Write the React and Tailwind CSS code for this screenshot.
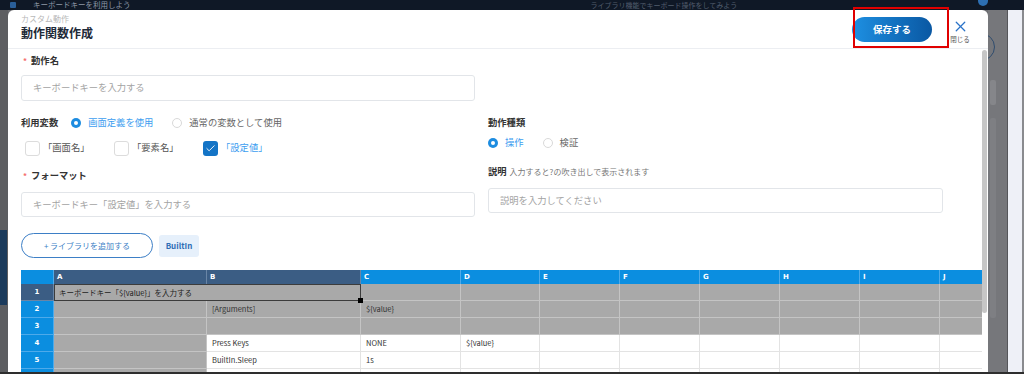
import { X, Check } from 'lucide-react';

const cols = [
  { k: 'A', w: 'w-[153px]', dark: true },
  { k: 'B', w: 'w-[154px]', dark: true },
  { k: 'C', w: 'w-[100px]' },
  { k: 'D', w: 'w-[79px]' },
  { k: 'E', w: 'w-[80px]' },
  { k: 'F', w: 'w-[80px]' },
  { k: 'G', w: 'w-[80px]' },
  { k: 'H', w: 'w-[80px]' },
  { k: 'I', w: 'w-[80px]' },
  { k: 'J', w: 'w-[80px]' },
];

const rows = [
  { n: 1, gray: true },
  { n: 2, gray: true, vals: { B: '[Arguments]', C: '${value}' } },
  { n: 3, gray: true },
  { n: 4, vals: { B: 'Press Keys', C: 'NONE', D: '${value}' } },
  { n: 5, vals: { B: 'BuiltIn.Sleep', C: '1s' } },
  { n: 6, hideNum: true },
];

function Radio({ on, label }) {
  return (
    <div className="flex items-center">
      {on ? (
        <span className="w-[10px] h-[10px] rounded-full bg-[#1d8ce0] flex items-center justify-center">
          <span className="w-[4px] h-[4px] rounded-full bg-white" />
        </span>
      ) : (
        <span className="w-[10px] h-[10px] rounded-full border border-[#d9d9d9] bg-white" />
      )}
      <span className={`ml-[7px] ${on ? 'text-[#3d9ef0]' : 'text-[#666]'}`}>{label}</span>
    </div>
  );
}

function Box({ on, label }) {
  return (
    <div className="w-[89px] flex items-center">
      {on ? (
        <span className="w-[15px] h-[15px] rounded-[3px] bg-[#1474c6] flex items-center justify-center">
          <Check size={11} strokeWidth={2} className="text-white" />
        </span>
      ) : (
        <span className="w-[15px] h-[15px] rounded-[3px] border border-[#dcdcdc] bg-white" />
      )}
      <span className={`ml-[3px] ${on ? 'text-[#3d9ef0]' : 'text-[#555]'}`}>{label}</span>
    </div>
  );
}

function Label({ req, children }) {
  return (
    <div className="h-[14px] flex items-center font-bold text-[#333]">
      {req && <span className="text-[#f56c6c] text-[8px] mr-[4px] ml-[2px]">*</span>}
      {children}
    </div>
  );
}

function Input({ ph }) {
  return (
    <div className="h-[25px] border border-[#e2e5e9] rounded-[3px] flex items-center pl-[11px] text-[#a3a3a3]">
      {ph}
    </div>
  );
}

function Sheet() {
  return (
    <div className="w-[961px] overflow-hidden mt-[12px] text-[7.5px]">
      <div className="flex w-[1100px] h-[14px] font-['DejaVu_Sans',sans-serif]">
        <div className="w-[33px] shrink-0 bg-[#0b8ee0] border-r border-[#4eaaea]" />
        {cols.map((c) => (
          <div
            key={c.k}
            className={`${c.w} shrink-0 pl-[3px] pt-[2px] text-white font-bold text-[7px] border-r ${
              c.dark ? 'bg-[#3b5d84] border-[#6985a6]' : 'bg-[#0b8ee0] border-[#4eaaea]'
            }`}
          >
            {c.k}
          </div>
        ))}
      </div>
      {rows.map((r) => (
        <div key={r.n} className="flex w-[1100px] h-[17px]">
          <div
            className={`w-[33px] shrink-0 flex items-center justify-center text-white font-bold text-[7px] border-b border-r font-['DejaVu_Sans',sans-serif] ${
              r.n === 1 ? 'bg-[#3b5d84] border-[#6985a6]' : 'bg-[#0b8ee0] border-[#4eaaea]'
            }`}
          >
            {!r.hideNum && r.n}
          </div>
          {r.n === 1 && (
            <div className="relative w-[307px] shrink-0 bg-[#a9a9a9] border border-[#3c3c3c] flex items-center pl-[4px] text-[#222]">
              キーボードキー「${'{value}'}」を入力する
              <span className="absolute right-[-3px] bottom-[-3px] w-[5px] h-[5px] bg-black z-10" />
            </div>
          )}
          {cols.map((c) => {
            if (r.n === 1 && (c.k === 'A' || c.k === 'B')) return null;
            const gray = r.gray || c.k === 'A';
            const v = r.vals && r.vals[c.k];
            return (
              <div
                key={c.k}
                className={`${c.w} shrink-0 flex items-center pl-[5px] text-[#333] border-r border-b ${
                  gray ? 'bg-[#a9a9a9] border-[#c4c4c4]' : 'bg-white border-[#e3e3e3]'
                }`}
              >
                {v}
              </div>
            );
          })}
        </div>
      ))}
    </div>
  );
}

export default function App() {
  return (
    <div className="relative w-[1024px] h-[374px] overflow-hidden flex flex-col bg-[#6b6c70] text-[9.3px] font-['Noto_Sans_CJK_JP','Noto_Sans',sans-serif]">
      <div className="h-[10px] shrink-0 bg-[#0f1826] flex items-center">
        <span className="ml-[10px] w-[6px] h-[6px] bg-[#2a5f9a] rounded-[1px]" />
        <span className="ml-[17px] text-[7.5px] leading-[10px] text-[#8e98a6] whitespace-nowrap">
          キーボードキーを利用しよう
        </span>
        <span className="ml-[460px] text-[7px] leading-[10px] text-[#525d6d] whitespace-nowrap">
          ライブラリ機能でキーボード操作をしてみよう
        </span>
        <span className="ml-auto mr-[36px] w-[10px] h-[6px] rounded-b-full bg-[#2d6fb3] self-start" />
      </div>

      <div className="flex flex-1 min-h-0">
        <div className="w-[8px] shrink-0 bg-[#5d5e61] flex flex-col">
          <div className="h-[220px]" />
          <div className="w-[7px] h-[75px] bg-[#1b3b5c]" />
        </div>

        <div className="w-[980px] shrink-0 bg-white rounded-t-[6px] flex flex-col overflow-hidden">
          <div className="h-[39px] shrink-0 border-b border-[#eceef2] flex items-center pl-[13px] pr-[13px]">
            <div className="flex flex-col self-start pt-[3px]">
              <span className="text-[8px] leading-[12px] text-[#b8b8b8]">カスタム動作</span>
              <span className="text-[12px] leading-[16px] font-bold text-[#1e2a38]">動作関数作成</span>
            </div>
            <div className="ml-auto flex items-center">
              <button className="w-[80px] h-[25px] rounded-full bg-gradient-to-r from-[#1e90e2] to-[#0a58a3] text-white font-bold text-[9.5px]">
                保存する
              </button>
              <div className="w-[30px] ml-[13px] flex flex-col items-center pt-[4px]">
                <X size={17} strokeWidth={1.8} className="text-[#2a73c8]" />
                <span className="text-[6.5px] leading-[9px] text-[#555]">閉じる</span>
              </div>
            </div>
          </div>

          <div className="flex flex-1 min-h-0">
            <div className="pl-[13px] w-[974px] shrink-0">
              <div className="flex">
                <div className="w-[454px] shrink-0">
                  <div className="mt-[5px]">
                    <Label req>動作名</Label>
                  </div>
                  <div className="mt-[7px] h-[26px] border border-[#e2e5e9] rounded-[3px] flex items-center pl-[11px] text-[#a3a3a3]">
                    キーボードキーを入力する
                  </div>
                  <div className="mt-[14px] h-[16px] flex items-center">
                    <span className="font-bold text-[#333]">利用変数</span>
                    <div className="ml-[13px]">
                      <Radio on label="画面定義を使用" />
                    </div>
                    <div className="ml-[19px]">
                      <Radio label="通常の変数として使用" />
                    </div>
                  </div>
                  <div className="mt-[9px] h-[16px] flex items-center pl-[4px]">
                    <Box label="「画面名」" />
                    <Box label="「要素名」" />
                    <Box on label="「設定値」" />
                  </div>
                  <div className="mt-[13px]">
                    <Label req>フォーマット</Label>
                  </div>
                  <div className="mt-[9px]">
                    <Input ph="キーボードキー「設定値」を入力する" />
                  </div>
                  <div className="mt-[16px] flex items-center">
                    <button className="w-[132px] h-[25px] rounded-full border-[1.5px] border-[#3d7fc6] text-[#3d7fc6] text-[8px]">
                      + ライブラリを追加する
                    </button>
                    <span className="ml-[6px] w-[40px] h-[22px] rounded-[3px] bg-[#e6f0fb] text-[#2e6db5] text-[8px] font-semibold flex items-center justify-center">
                      BuiltIn
                    </span>
                  </div>
                </div>

                <div className="w-[455px] ml-[13px] shrink-0">
                  <div className="mt-[67px]">
                    <Label>動作種類</Label>
                  </div>
                  <div className="mt-[6px] h-[14px] flex items-center">
                    <Radio on label="操作" />
                    <div className="ml-[19px]">
                      <Radio label="検証" />
                    </div>
                  </div>
                  <div className="mt-[15px] h-[14px] flex items-center">
                    <span className="font-bold text-[#333]">説明</span>
                    <span className="ml-[3px] text-[8px] text-[#777]">入力すると?の吹き出しで表示されます</span>
                  </div>
                  <div className="mt-[9px]">
                    <Input ph="説明を入力してください" />
                  </div>
                </div>
              </div>

              <Sheet />
            </div>

            <div className="w-[5px] shrink-0">
              <div className="mt-[1px] h-[263px] bg-[#c6c6c6] rounded-full" />
            </div>
          </div>
        </div>

        <div className="relative flex-1 flex overflow-hidden">
          <div className="relative w-[19px] bg-[#76777b]">
            <span className="absolute left-[-21px] top-[23px] w-[28px] h-[28px] rounded-full border-[1.5px] border-[#2f4c6e]" />
            <span className="absolute left-[2px] top-[70px] w-[6px] h-[25px] rounded-[2px] bg-[#85868a]" />
            <span className="absolute left-[2px] top-[108px] w-[6px] h-[200px] rounded-[2px] bg-[#7e7f83]" />
          </div>
          <div className="w-[1px] bg-[#55565a]" />
          <div className="w-[14px] bg-[#eef0f7]" />
          <div className="flex-1 bg-[#8a8b8f]" />
        </div>
      </div>

      <div className="h-[2px] shrink-0 bg-[#2e2e2e]" />

      <div className="absolute left-[853px] top-[7px] w-[96px] h-[41px] border-2 border-[#e00000]" />
    </div>
  );
}
